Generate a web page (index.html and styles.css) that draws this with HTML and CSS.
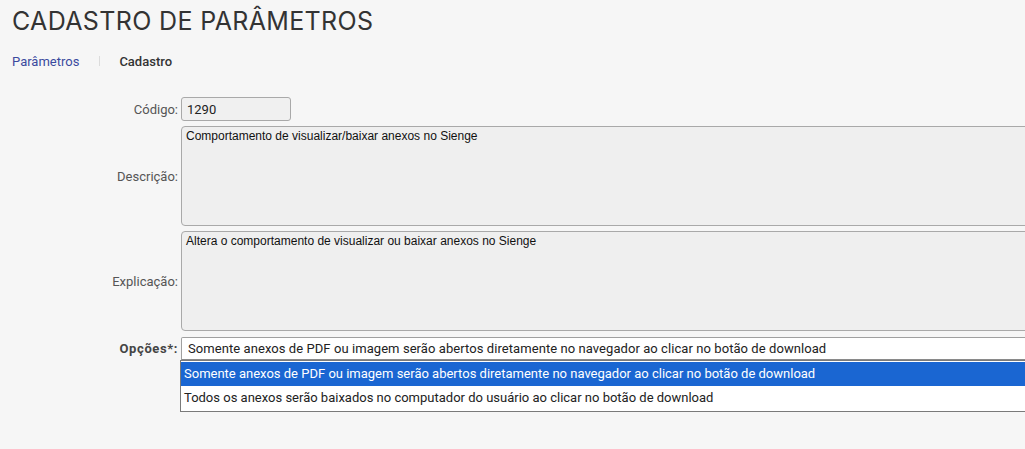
FILE: index.html
```html
<!DOCTYPE html>
<html lang="pt-BR">
<head>
<meta charset="utf-8">
<title>Cadastro de Parâmetros</title>
<link rel="stylesheet" href="styles.css">
</head>
<body>
<div class="page">
  <h1 class="title">CADASTRO DE PARÂMETROS</h1>
  <nav class="crumbs">
    <a class="crumb-link" href="#">Parâmetros</a>
    <span class="crumb-sep"></span>
    <span class="crumb-current">Cadastro</span>
  </nav>
  <form class="form">
    <label class="label" for="codigo">Código:</label>
    <div class="field"><input id="codigo" class="input-code" type="text" value="1290" readonly></div>

    <label class="label label-mid" for="descricao">Descrição:</label>
    <div class="field"><textarea id="descricao" class="area" readonly>Comportamento de visualizar/baixar anexos no Sienge</textarea></div>

    <label class="label label-mid" for="explicacao">Explicação:</label>
    <div class="field"><textarea id="explicacao" class="area" readonly>Altera o comportamento de visualizar ou baixar anexos no Sienge</textarea></div>

    <label class="label label-strong">Opções*:</label>
    <div class="select-wrap">
      <div class="select">Somente anexos de PDF ou imagem serão abertos diretamente no navegador ao clicar no botão de download</div>
    </div>

    <div class="spacer"></div>
    <div class="list-wrap">
      <div class="listbox">
        <div class="option option-active">Somente anexos de PDF ou imagem serão abertos diretamente no navegador ao clicar no botão de download</div>
        <div class="option">Todos os anexos serão baixados no computador do usuário ao clicar no botão de download</div>
      </div>
    </div>
  </form>
</div>
</body>
</html>
```
FILE: styles.css
```css
html {
  overflow: hidden;
  background: #f6f6f6;
}
body {
  margin: 0;
  padding: 0;
  background: #f6f6f6;
  font-family: Roboto, "Liberation Sans", Arial, sans-serif;
  font-size: 13px;
  color: #333;
}
.page {
  width: 1200px;
  padding: 0 0 0 12px;
}
.title {
  margin: 0;
  padding-top: 6px;
  font-family: Inter, "Noto Sans", sans-serif;
  font-weight: 400;
  font-size: 25px;
  line-height: 30px;
  letter-spacing: 0.35px;
  color: #333;
}
.crumbs {
  display: flex;
  align-items: center;
  margin-top: 16px;
  height: 18px;
}
.crumb-link {
  color: #3a4a9e;
  text-decoration: none;
}
.crumb-sep {
  width: 1px;
  height: 10px;
  background: #dcdcdc;
  margin: 0 19px 0 20px;
}
.crumb-current {
  font-weight: 500;
  color: #333;
}
.form {
  display: grid;
  grid-template-columns: 166px 1fr;
  column-gap: 3px;
  row-gap: 5px;
  margin-top: 27px;
}
.label {
  text-align: right;
  color: #555;
  align-self: center;
}
.label-strong {
  font-weight: 700;
  color: #444;
  letter-spacing: 0.6px;
}
.field {
  display: flex;
}
.input-code {
  box-sizing: border-box;
  width: 110px;
  height: 24px;
  margin: 0;
  padding: 0 5px;
  border: 1px solid #a9a9a9;
  border-radius: 3px;
  background: #f0f0f0;
  font-family: Roboto, "Liberation Sans", sans-serif;
  font-size: 13px;
  color: #222;
  outline: none;
}
.area {
  box-sizing: border-box;
  width: 880px;
  height: 100px;
  margin: 0;
  padding: 2px 4px;
  border: 1px solid #a9a9a9;
  border-radius: 4px;
  background: #efefef;
  font-family: "Liberation Sans", Arial, sans-serif;
  font-size: 12px;
  color: #111;
  resize: none;
  outline: none;
}
.select-wrap {
  display: flex;
  margin-top: 1px;
}
.select {
  box-sizing: border-box;
  width: 880px;
  height: 23px;
  padding: 3px 6px;
  border: 1px solid #a0a0a0;
  border-bottom-color: #8a8a8a;
  border-radius: 2px 2px 0 0;
  background: #fff;
  color: #222;
  white-space: nowrap;
  letter-spacing: 0.07px;
}
.list-wrap {
  display: flex;
  margin-top: -5px;
  margin-left: -1px;
}
.listbox {
  box-sizing: border-box;
  width: 882px;
  padding: 1px 0;
  background: #fff;
  border: 1px solid #7a7a7a;
}
.option {
  height: 24px;
  line-height: 24px;
  padding: 0 3px;
  color: #222;
  white-space: nowrap;
}
.option-active {
  background: #1a66d2;
  color: #fff;
}
```
